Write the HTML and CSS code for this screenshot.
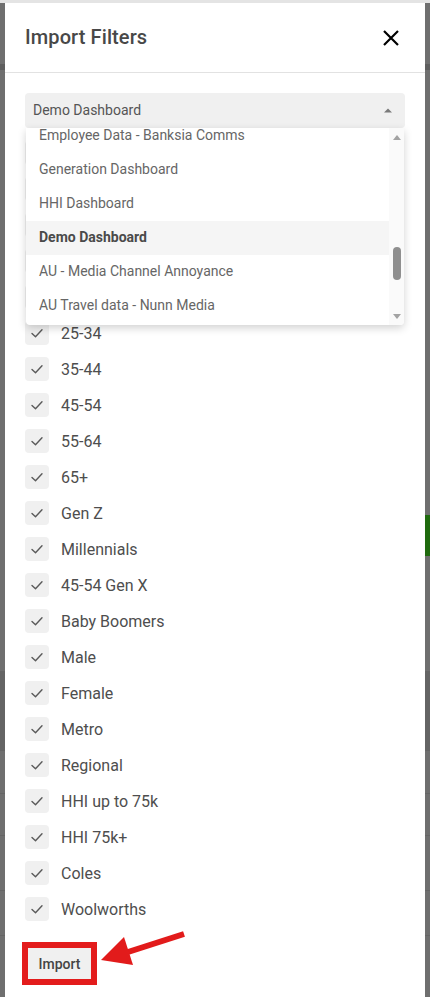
FILE: index.html
```html
<!DOCTYPE html>
<html lang="en">
<head>
<meta charset="utf-8">
<title>Import Filters</title>
<link rel="stylesheet" href="styles.css">
</head>
<body>
<div class="stage">
  <div class="bgpage">
    <div class="band band-top"></div>
    <div class="band band-gray h61"></div>
    <div class="band band-dark h6"></div>
    <div class="band band-gray h445"></div>
    <div class="band band-gray h41 green-row"><div class="green"></div></div>
    <div class="band band-gray h115"></div>
    <div class="band band-dark2 h79"></div>
    <div class="band band-gray h43 line"></div>
    <div class="band band-gray h42 line"></div>
    <div class="band band-gray h55 line"></div>
    <div class="band band-gray h45 line"></div>
    <div class="band band-gray h60 line"></div>
  </div>

  <div class="modal">
    <div class="modal-header">
      <h2 class="modal-title">Import Filters</h2>
      <svg class="close-icon" width="16" height="16" viewBox="0 0 16 16"><path d="M1 1 L15 15 M15 1 L1 15" stroke="#000" stroke-width="2.2" fill="none"/></svg>
    </div>
    <div class="modal-body">
      <div class="select">
        <span class="select-value">Demo Dashboard</span>
        <svg class="caret" width="8" height="5" viewBox="0 0 8 5"><path d="M0 4.5 L4 0.5 L8 4.5 Z" fill="#7a7a7a"/></svg>
      </div>

      <ul class="filters">
        <li class="filter"><span class="box"><svg width="24" height="24" viewBox="0 0 24 24"><path d="M7 12.5 L10.5 15.8 L17 8.8" class="tick"/></svg></span></li>
        <li class="filter"><span class="box"><svg width="24" height="24" viewBox="0 0 24 24"><path d="M7 12.5 L10.5 15.8 L17 8.8" class="tick"/></svg></span></li>
        <li class="filter"><span class="box"><svg width="24" height="24" viewBox="0 0 24 24"><path d="M7 12.5 L10.5 15.8 L17 8.8" class="tick"/></svg></span></li>
        <li class="filter"><span class="box"><svg width="24" height="24" viewBox="0 0 24 24"><path d="M7 12.5 L10.5 15.8 L17 8.8" class="tick"/></svg></span></li>
        <li class="filter"><span class="box"><svg width="24" height="24" viewBox="0 0 24 24"><path d="M7 12.5 L10.5 15.8 L17 8.8" class="tick"/></svg></span></li>
        <li class="filter"><span class="box"><svg width="24" height="24" viewBox="0 0 24 24"><path d="M7 12.5 L10.5 15.8 L17 8.8" class="tick"/></svg></span><span class="label">25-34</span></li>
        <li class="filter"><span class="box"><svg width="24" height="24" viewBox="0 0 24 24"><path d="M7 12.5 L10.5 15.8 L17 8.8" class="tick"/></svg></span><span class="label">35-44</span></li>
        <li class="filter"><span class="box"><svg width="24" height="24" viewBox="0 0 24 24"><path d="M7 12.5 L10.5 15.8 L17 8.8" class="tick"/></svg></span><span class="label">45-54</span></li>
        <li class="filter"><span class="box"><svg width="24" height="24" viewBox="0 0 24 24"><path d="M7 12.5 L10.5 15.8 L17 8.8" class="tick"/></svg></span><span class="label">55-64</span></li>
        <li class="filter"><span class="box"><svg width="24" height="24" viewBox="0 0 24 24"><path d="M7 12.5 L10.5 15.8 L17 8.8" class="tick"/></svg></span><span class="label">65+</span></li>
        <li class="filter"><span class="box"><svg width="24" height="24" viewBox="0 0 24 24"><path d="M7 12.5 L10.5 15.8 L17 8.8" class="tick"/></svg></span><span class="label">Gen Z</span></li>
        <li class="filter"><span class="box"><svg width="24" height="24" viewBox="0 0 24 24"><path d="M7 12.5 L10.5 15.8 L17 8.8" class="tick"/></svg></span><span class="label">Millennials</span></li>
        <li class="filter"><span class="box"><svg width="24" height="24" viewBox="0 0 24 24"><path d="M7 12.5 L10.5 15.8 L17 8.8" class="tick"/></svg></span><span class="label">45-54 Gen X</span></li>
        <li class="filter"><span class="box"><svg width="24" height="24" viewBox="0 0 24 24"><path d="M7 12.5 L10.5 15.8 L17 8.8" class="tick"/></svg></span><span class="label">Baby Boomers</span></li>
        <li class="filter"><span class="box"><svg width="24" height="24" viewBox="0 0 24 24"><path d="M7 12.5 L10.5 15.8 L17 8.8" class="tick"/></svg></span><span class="label">Male</span></li>
        <li class="filter"><span class="box"><svg width="24" height="24" viewBox="0 0 24 24"><path d="M7 12.5 L10.5 15.8 L17 8.8" class="tick"/></svg></span><span class="label">Female</span></li>
        <li class="filter"><span class="box"><svg width="24" height="24" viewBox="0 0 24 24"><path d="M7 12.5 L10.5 15.8 L17 8.8" class="tick"/></svg></span><span class="label">Metro</span></li>
        <li class="filter"><span class="box"><svg width="24" height="24" viewBox="0 0 24 24"><path d="M7 12.5 L10.5 15.8 L17 8.8" class="tick"/></svg></span><span class="label">Regional</span></li>
        <li class="filter"><span class="box"><svg width="24" height="24" viewBox="0 0 24 24"><path d="M7 12.5 L10.5 15.8 L17 8.8" class="tick"/></svg></span><span class="label">HHI up to 75k</span></li>
        <li class="filter"><span class="box"><svg width="24" height="24" viewBox="0 0 24 24"><path d="M7 12.5 L10.5 15.8 L17 8.8" class="tick"/></svg></span><span class="label">HHI 75k+</span></li>
        <li class="filter"><span class="box"><svg width="24" height="24" viewBox="0 0 24 24"><path d="M7 12.5 L10.5 15.8 L17 8.8" class="tick"/></svg></span><span class="label">Coles</span></li>
        <li class="filter"><span class="box"><svg width="24" height="24" viewBox="0 0 24 24"><path d="M7 12.5 L10.5 15.8 L17 8.8" class="tick"/></svg></span><span class="label">Woolworths</span></li>
      </ul>

      <button class="import-btn">Import</button>
    </div>

    <div class="dropdown">
      <ul class="options">
        <li class="option">Employee Data - Banksia Comms</li>
        <li class="option">Generation Dashboard</li>
        <li class="option">HHI Dashboard</li>
        <li class="option selected">Demo Dashboard</li>
        <li class="option">AU - Media Channel Annoyance</li>
        <li class="option">AU Travel data - Nunn Media</li>
      </ul>
      <div class="scrollbar">
        <svg class="sb-arrow" width="8" height="5" viewBox="0 0 8 5"><path d="M0 5 L4 0 L8 5 Z" fill="#a3a3a3"/></svg>
        <div class="sb-track"><div class="sb-thumb"></div></div>
        <svg class="sb-arrow" width="8" height="5" viewBox="0 0 8 5"><path d="M0 0 L4 5 L8 0 Z" fill="#a3a3a3"/></svg>
      </div>
    </div>

    <svg class="annotation-arrow" width="90" height="45" viewBox="0 0 90 45">
      <path d="M84 6 L28 24" stroke="#e21b1b" stroke-width="6" fill="none"/>
      <path d="M1 32 L24 9 L33 37 Z" fill="#e21b1b"/>
    </svg>
  </div>
</div>
</body>
</html>
```

FILE: styles.css
```css
* { box-sizing: border-box; }

html, body {
  margin: 0;
  padding: 0;
  width: 430px;
  height: 997px;
  overflow: hidden;
  font-family: Roboto, "Liberation Sans", Arial, sans-serif;
}

.stage {
  display: grid;
  width: 430px;
  height: 997px;
}

.bgpage, .modal {
  grid-area: 1 / 1;
}

.bgpage {
  display: flex;
  flex-direction: column;
  background: #6f6f6f;
}

.band { width: 100%; flex: none; }
.band-top { height: 3px; background: #e4e4e4; }
.band-gray { background: #6f6f6f; }
.band-dark { background: #5e5e5e; }
.band-dark2 { background: #646464; }
.line { border-top: 1px solid #656565; }
.h6 { height: 6px; }
.h41 { height: 41px; }
.h42 { height: 42px; }
.h43 { height: 43px; }
.h45 { height: 45px; }
.h55 { height: 55px; }
.h60 { height: 60px; }
.h61 { height: 61px; }
.h79 { height: 79px; }
.h115 { height: 115px; }
.h445 { height: 445px; }

.green-row { display: flex; justify-content: flex-end; }
.green { width: 60px; height: 100%; background: #1f6a0e; }

.modal {
  position: relative;
  margin: 3px 0 0 5px;
  width: 420px;
  height: 994px;
  background: #ffffff;
}

.modal-header {
  height: 70px;
  border-bottom: 1px solid #e2e2e2;
  display: flex;
  align-items: center;
  justify-content: space-between;
  padding: 0 26px 0 20px;
}

.modal-title {
  margin: 0 0 2px 0;
  font-size: 20px;
  font-weight: 500;
  color: #484848;
  letter-spacing: 0.1px;
}

.close-icon { display: block; }

.modal-body {
  padding: 20px 20px 0 20px;
}

.select {
  height: 35px;
  background: #f0f0f0;
  border-radius: 4px;
  display: flex;
  align-items: center;
  justify-content: space-between;
  padding: 0 13px 0 8px;
}

.select-value {
  font-size: 14px;
  color: #555555;
  margin-bottom: 2px;
}

.caret { display: block; margin-top: -1px; }

.filters {
  list-style: none;
  margin: 7px 0 0 0;
  padding: 0;
}

.filter {
  height: 36px;
  display: flex;
  align-items: center;
  gap: 12px;
}

.box {
  width: 24px;
  height: 24px;
  border-radius: 4px;
  background: #f0f0f0;
  display: block;
}

.box svg { display: block; }

.tick {
  fill: none;
  stroke: #5a5a5a;
  stroke-width: 1.4;
  stroke-linecap: round;
  stroke-linejoin: round;
}

.label {
  font-size: 16px;
  color: #4e4e4e;
}

.import-btn {
  margin: 21px 0 0 3px;
  width: 63px;
  height: 31px;
  background: #f0f0f0;
  border: none;
  border-radius: 0;
  outline: 6px solid #e31c1c;
  font-family: Roboto, "Liberation Sans", Arial, sans-serif;
  font-size: 14px;
  font-weight: 500;
  color: #444444;
  padding: 0;
  display: block;
}

.dropdown {
  position: absolute;
  left: 21px;
  top: 125px;
  width: 378px;
  height: 197px;
  background: #ffffff;
  box-shadow: 0 3px 8px rgba(0, 0, 0, 0.18);
  border-radius: 0 0 4px 4px;
  overflow: hidden;
  display: flex;
}

.options {
  list-style: none;
  margin: -9px 0 0 0;
  padding: 0;
  flex: 1;
}

.option {
  height: 34px;
  line-height: 32px;
  padding-left: 13px;
  font-size: 14px;
  color: #666666;
}

.option.selected {
  background: #f5f5f5;
  font-weight: 700;
  color: #4a4a4a;
}

.scrollbar {
  width: 15px;
  background: #fafafa;
  display: flex;
  flex-direction: column;
  align-items: center;
  padding: 7px 0 6px 0;
  gap: 0;
}

.sb-arrow { display: block; flex: none; }

.sb-track {
  flex: 1;
  width: 8px;
  padding-top: 107px;
}

.sb-thumb {
  width: 8px;
  height: 33px;
  border-radius: 4px;
  background: #8f8f8f;
}

.annotation-arrow {
  position: absolute;
  left: 95px;
  top: 925px;
  display: block;
}
```
